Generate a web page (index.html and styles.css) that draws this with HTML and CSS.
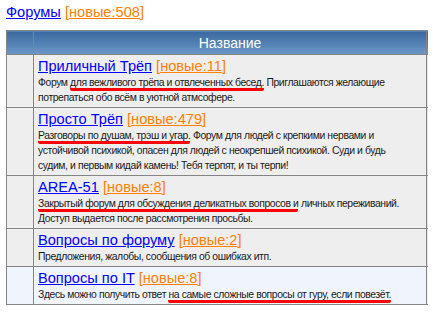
FILE: index.html
```html
<!DOCTYPE html>
<html lang="ru">
<head>
    <meta charset="UTF-8">
    <title>Форумы</title>
    <link rel="stylesheet" href="styles.css">
</head>
<body>

<div class="top">
    <a href="#" class="link">Форумы</a>
    <span class="new">[<a href="#">новые:508</a>]</span>
</div>

<table class="forums">
    <colgroup>
        <col class="col-icon">
        <col class="col-main">
        <col class="col-side">
    </colgroup>
    <thead>
        <tr>
            <th></th>
            <th>Название</th>
            <th></th>
        </tr>
    </thead>
    <tbody>
        <tr>
            <td></td>
            <td>
                <div class="title"><a href="#" class="link">Приличный Трёп</a> <span class="new">[<a href="#">новые:11</a>]</span></div>
                <div class="desc">Форум <span class="mark">для вежливого трёпа и отвлеченных бесед.</span> Приглашаются желающие потрепаться обо всём в уютной атмсофере.</div>
            </td>
            <td class="side"></td>
        </tr>
        <tr>
            <td></td>
            <td>
                <div class="title"><a href="#" class="link">Просто Трёп</a> <span class="new">[<a href="#">новые:479</a>]</span></div>
                <div class="desc"><span class="mark">Разговоры по душам, трэш и угар.</span> Форум для людей с крепкими нервами и устойчивой психикой, опасен для людей с неокрепшей психикой. Суди и будь судим, и первым кидай камень! Тебя терпят, и ты терпи!</div>
            </td>
            <td class="side"></td>
        </tr>
        <tr>
            <td></td>
            <td>
                <div class="title"><a href="#" class="link">AREA-51</a> <span class="new">[<a href="#">новые:8</a>]</span></div>
                <div class="desc"><span class="mark">Закрытый форум для обсуждения деликатных вопросов и</span> личных переживаний. Доступ выдается после рассмотрения просьбы.</div>
            </td>
            <td class="side"></td>
        </tr>
        <tr>
            <td></td>
            <td>
                <div class="title"><a href="#" class="link">Вопросы по форуму</a> <span class="new">[<a href="#">новые:2</a>]</span></div>
                <div class="desc">Предложения, жалобы, сообщения об ошибках итп.</div>
            </td>
            <td class="side"></td>
        </tr>
        <tr class="alt">
            <td></td>
            <td>
                <div class="title"><a href="#" class="link">Вопросы по IT</a> <span class="new">[<a href="#">новые:8</a>]</span></div>
                <div class="desc">Здесь можно получить ответ <span class="mark">на самые сложные вопросы от гуру, если повезёт.</span></div>
            </td>
            <td class="side"></td>
        </tr>
    </tbody>
</table>

</body>
</html>
```

FILE: styles.css
```css
html, body {
    overflow: hidden;
}

body {
    margin: 4px 6px;
    font-family: "Liberation Sans", Arial, sans-serif;
    font-size: 14.6px;
    background: #fff;
}

.top {
    line-height: 17px;
    margin-bottom: 9px;
}

.link {
    color: #0000ff;
}

.new,
.new a {
    color: #ff8000;
}

.forums {
    border-collapse: collapse;
    table-layout: fixed;
    width: 480px;
}
.col-icon {
    width: 27px;
}
.col-main {
    width: 393px;
}
.col-side {
    width: 60px;
}

.forums th,
.forums td {
    border: 1px solid #858585;
}

.forums th {
    height: 23px;
    padding: 0;
    color: #fff;
    font-size: 14px;
    font-weight: normal;
    background: linear-gradient(to bottom, #3b68a0, #6b98c6);
}

.forums td {
    padding: 3px 20px 2px 4px;
    background: #eeeeee;
    vertical-align: top;
}
.forums td.side {
    background: #e2e2e2;
}
.forums tr.alt td {
    background: #f0f5fd;
}

.title {
    line-height: 17px;
}

.desc {
    font-size: 10.4px;
    letter-spacing: -0.4px;
    line-height: 15px;
    color: #1a1a1a;
}

.mark {
    border-bottom: 3px solid #f00;
    border-radius: 2px;
}
```
